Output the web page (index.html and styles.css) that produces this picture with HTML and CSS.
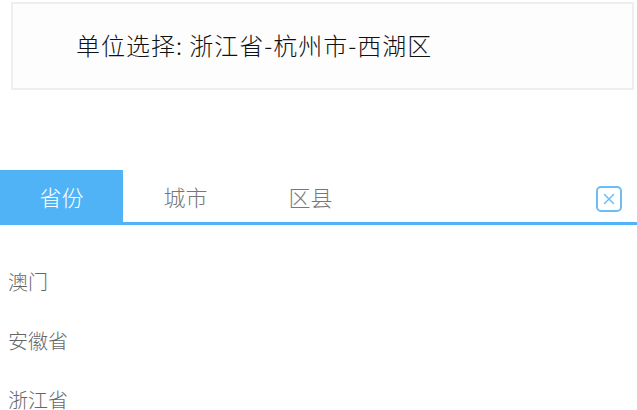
FILE: index.html
```html
<!DOCTYPE html>
<html lang="zh-CN">
<head>
  <meta charset="UTF-8">
  <title>单位选择</title>
  <meta name="viewport" content="width=device-width, initial-scale=1.0">
  <link rel="stylesheet" href="styles.css">
</head>
<body>
  <div class="picker-field">
    <span class="picker-label">单位选择: 浙江省-杭州市-西湖区</span>
  </div>

  <div class="picker-panel">
    <div class="tabs">
      <div class="tab active">省份</div>
      <div class="tab">城市</div>
      <div class="tab">区县</div>
      <button class="close-btn" aria-label="关闭">
        <svg width="12" height="12" viewBox="0 0 12 12">
          <path d="M1.5 1.5 L10.5 10.5 M10.5 1.5 L1.5 10.5" stroke="#6cbdf6" stroke-width="1.5" stroke-linecap="round" fill="none"/>
        </svg>
      </button>
    </div>

    <ul class="options">
      <li class="option">澳门</li>
      <li class="option">安徽省</li>
      <li class="option">浙江省</li>
    </ul>
  </div>
</body>
</html>
```

FILE: styles.css
```css
:root {
  --blue: #4fb3f6;
  --line: #e8e8e8;
}

* {
  margin: 0;
  padding: 0;
  box-sizing: border-box;
}

body {
  background: #fff;
  font-family: 'Noto Sans CJK SC', 'Noto Sans', sans-serif;
  font-weight: 300;
  overflow: hidden;
}

.picker-field {
  margin: 2px 3px 0 11px;
  height: 88px;
  display: flex;
  align-items: center;
  padding-left: 63px;
  background: #fdfdfd;
  border: 2px solid #eeeeee;
}

.picker-label {
  font-size: 24px;
  letter-spacing: 1px;
  color: #111;
  line-height: 1;
  margin-top: -2px;
}

.picker-panel {
  margin-top: 80px;
}

.tabs {
  display: flex;
  align-items: center;
  height: 55px;
  border-bottom: 3px solid var(--blue);
}

.tab {
  width: 125px;
  height: 100%;
  display: flex;
  align-items: center;
  justify-content: center;
  font-size: 22px;
  color: #777;
}

.tab.active {
  width: 123px;
  background: var(--blue);
  color: #fff;
}

.close-btn {
  margin-left: auto;
  margin-right: 15px;
  margin-top: 6px;
  width: 26px;
  height: 26px;
  border: 2px solid #6cbdf6;
  border-radius: 5px;
  background: #fff;
  display: flex;
  align-items: center;
  justify-content: center;
}

.options {
  list-style: none;
  padding-top: 27px;
}

.option {
  height: 59px;
  line-height: 59px;
  padding-left: 8px;
  font-size: 20px;
  color: #666;
}
```
